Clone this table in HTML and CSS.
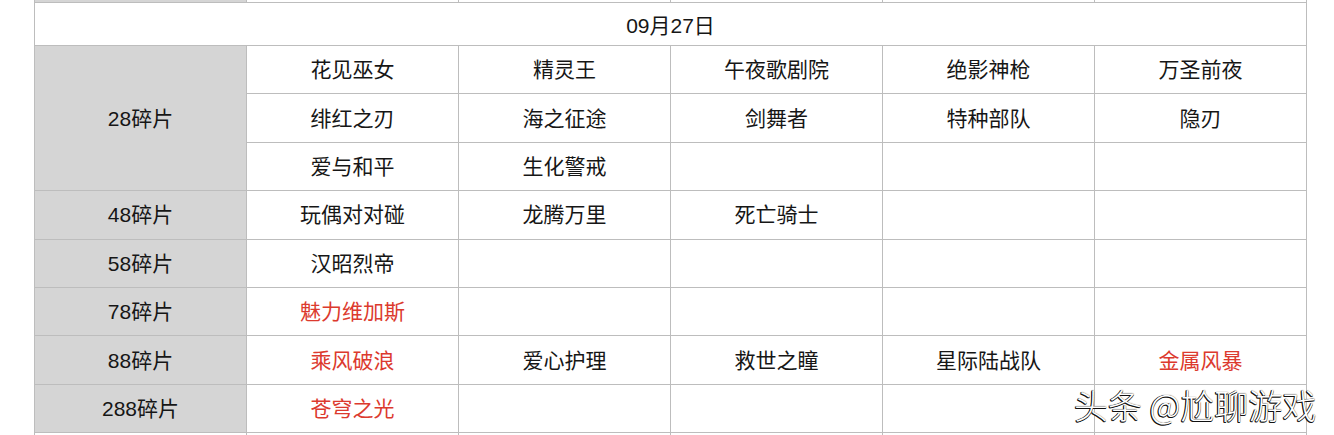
FILE: index.html
```html
<!DOCTYPE html>
<html lang="zh-CN">
<head>
<meta charset="utf-8">
<title>09月27日</title>
<link rel="stylesheet" href="styles.css">
</head>
<body>
<div class="page">
  <table class="sheet">
    <colgroup>
      <col class="c-label"><col><col><col><col><col>
    </colgroup>
    <tr class="stub"><td class="label"></td><td></td><td></td><td></td><td></td><td></td></tr>
    <tr class="hdr"><td colspan="6">09月27日</td></tr>
    <tr class="row"><td class="label" rowspan="3">28碎片</td><td>花见巫女</td><td>精灵王</td><td>午夜歌剧院</td><td>绝影神枪</td><td>万圣前夜</td></tr>
    <tr class="row"><td>绯红之刃</td><td>海之征途</td><td>剑舞者</td><td>特种部队</td><td>隐刃</td></tr>
    <tr class="row"><td>爱与和平</td><td>生化警戒</td><td></td><td></td><td></td></tr>
    <tr class="row"><td class="label">48碎片</td><td>玩偶对对碰</td><td>龙腾万里</td><td>死亡骑士</td><td></td><td></td></tr>
    <tr class="row"><td class="label">58碎片</td><td>汉昭烈帝</td><td></td><td></td><td></td><td></td></tr>
    <tr class="row"><td class="label">78碎片</td><td class="red">魅力维加斯</td><td></td><td></td><td></td><td></td></tr>
    <tr class="row"><td class="label">88碎片</td><td class="red">乘风破浪</td><td>爱心护理</td><td>救世之瞳</td><td>星际陆战队</td><td class="red">金属风暴</td></tr>
    <tr class="row"><td class="label">288碎片</td><td class="red">苍穹之光</td><td></td><td></td><td></td><td></td></tr>
    <tr class="row"><td></td><td></td><td></td><td></td><td></td><td></td></tr>
  </table>
  <div class="watermark">头条 @尬聊游戏</div>
</div>
</body>
</html>
```

FILE: styles.css
```css
html, body {
  margin: 0;
  padding: 0;
  background: #ffffff;
}
body {
  font-family: "Liberation Sans", "Noto Sans CJK SC", sans-serif;
  color: #161616;
}
.page {
  position: relative;
  width: 1334px;
  height: 435px;
  overflow: hidden;
}
.sheet {
  margin: -1px 0 0 34px;
  width: 1272px;
  border-collapse: collapse;
  table-layout: fixed;
  font-size: 21px;
}
.sheet col { width: 212px; }
.sheet td {
  border: 1px solid #bdbdbd;
  padding: 0;
  text-align: center;
  vertical-align: middle;
  white-space: nowrap;
}
.sheet td.label {
  background: #d5d5d5;
}
.sheet td.red {
  color: #dc3a2e;
}
.stub td { height: 2px; }
.hdr td { height: 42px; }
.row td {
  height: 44.4px;
  padding-bottom: 3px;
}
.watermark {
  position: absolute;
  left: 1074px;
  top: 384px;
  font-family: "Noto Sans CJK SC", sans-serif;
  font-size: 34px;
  font-weight: 300;
  line-height: 42px;
  color: #ffffff;
  text-shadow: -1px 1px 0 #111, -1px 0 0 #111, 0 1px 0 #111, 0 0 1px #333;
}
```
